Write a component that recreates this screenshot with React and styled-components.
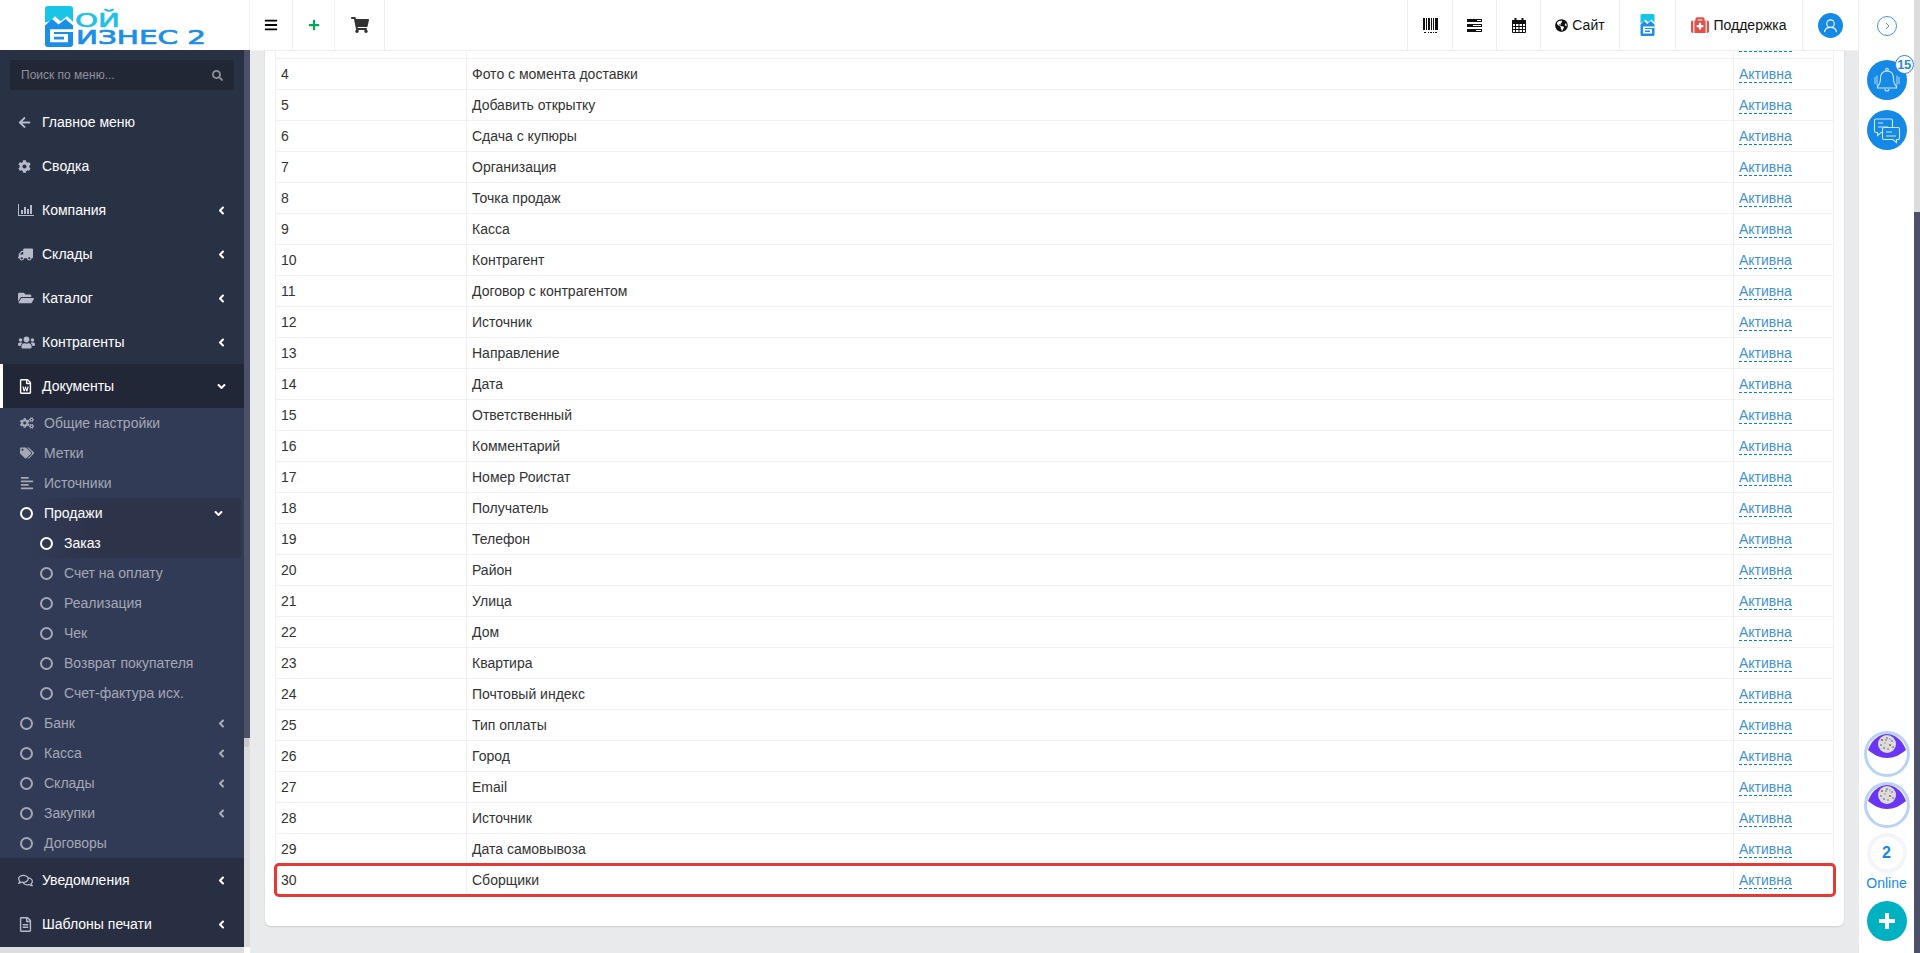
import React from 'react';
import styled, { createGlobalStyle } from 'styled-components';
import {
  FaBars, FaPlus, FaShoppingCart, FaGlobeAmericas, FaMedkit,
  FaSearch, FaArrowLeft, FaCog, FaTruck, FaFolderOpen, FaUsers, FaRegFileWord,
  FaCogs, FaTags, FaAlignLeft, FaRegComments, FaRegFileAlt, FaAngleLeft, FaAngleDown,
} from 'react-icons/fa';

const Global = createGlobalStyle`
  html, body { margin: 0; padding: 0; height: 953px; overflow: hidden; background: #fff; }
  body { font-family: "Liberation Sans", Arial, sans-serif; font-size: 14px; color: #333; }
  * { box-sizing: border-box; }
`;

const Page = styled.div`display: flex; width: 1920px; height: 953px; overflow: hidden;`;
const Main = styled.div`display: flex; flex-direction: column; width: 1859px; height: 953px;`;

const Header = styled.header`display: flex; flex: none; height: 50px; background: #fff;`;
const LogoCell = styled.div`flex: none; width: 250px; height: 50px; border-right: 1px solid #eee;`;
const Cell = styled.div`
  flex: none; display: flex; align-items: center; justify-content: center; gap: ${p => p.$gap || 0}px;
  width: ${p => p.$w}px; height: 50px; border-right: 1px solid #eee; color: #111; font-size: 14px;
  ${p => p.$first && 'border-left: 1px solid #eee;'}
`;
const Spacer = styled.div`flex: 1;`;
const Avatar = styled.div`
  width: 25px; height: 25px; border-radius: 50%; background: #1589e6; display: flex;
  align-items: center; justify-content: center;
`;

const Body = styled.div`display: flex; flex: 1; min-height: 0;`;

const Sidebar = styled.aside`display: flex; flex: none; width: 250px; background: #fff;`;
const Nav = styled.nav`
  display: flex; flex-direction: column; width: 244px; height: 903px;
  background: #293145; border-bottom: 6px solid #dedede;
`;
const SearchWrap = styled.div`padding: 10px; flex: none;`;
const SearchBox = styled.div`
  display: flex; align-items: center; justify-content: space-between; height: 30px; padding: 0 11px;
  background: #222736; border-radius: 3px; color: #8f929b; font-size: 12px;
`;
const Item = styled.div`
  display: flex; align-items: center; flex: none; height: 44px; padding-left: 18px; padding-right: 16px;
  color: #fff; font-size: 14px; background: ${p => (p.$active ? '#222738' : 'transparent')};
  border-left: ${p => (p.$active ? '3px solid #fff' : 'none')};
  ${p => p.$active && 'padding-left: 15px;'}
`;
const ItemIcon = styled.span`
  display: flex; width: 24px; flex: none; color: #b7bacb; font-size: ${p => p.$size || 15}px;
  ${p => p.$white && 'color: #fff;'}
  ${p => p.$flip && 'transform: scaleX(-1); justify-content: flex-end;'}
`;
const ItemText = styled.span`flex: 1; white-space: nowrap;`;
const Caret = styled.span`display: flex; font-size: 13px; color: ${p => (p.$dim ? '#a9adb9' : '#fff')};`;
const SubList = styled.div`flex: none; background: #323b56;`;
const SubItem = styled.div`
  display: flex; align-items: center; height: 30px; padding-left: 20px; padding-right: 16px;
  color: ${p => (p.$on ? '#fff' : '#a5a8b4')}; font-size: 14px; white-space: nowrap;
`;
const SubIcon = styled.span`display: flex; width: 24px; flex: none; font-size: 14px;`;
const Ring = styled.span`
  flex: none; width: 13px; height: 13px; border-radius: 50%; border: 2.5px solid currentColor; margin-right: 11px;
`;
const OpenGroup = styled.div`
  width: 241px; background: linear-gradient(90deg, #323b56 10%, #2d3349 40%);
`;
const DeepItem = styled(SubItem)`padding-left: 40px;`;
const Tail = styled.div`flex: none; background: #292f43;`;

const ScrollRail = styled.div`
  display: flex; flex-direction: column; width: 6px; height: 897px; background: #dcdcdc;
`;
const ScrollThumb = styled.div`flex: none; height: ${p => p.$h}px; background: ${p => p.$bg || '#4c5169'};`;
const ScrollNub = styled.div`flex: none; width: 5px; height: 9px; background: #c9c9c9; border-radius: 0 0 2px 2px;`;

const Content = styled.main`
  flex: 1; padding: 0 15px; background: #e9eaec; overflow: hidden; border-top: 1px solid #f0f0f0;
`;
const Card = styled.section`
  margin-top: -23px; padding: 0 10px 30px; background: #fff; border-radius: 6px;
  box-shadow: 0 1px 2px rgba(0, 0, 0, 0.12);
`;
const Row = styled.div`
  position: relative; display: grid; grid-template-columns: 192px 1267px 100px; height: 31px;
  border-bottom: 1px solid #f1f1f1;
  ${p => p.$marked && `
    &::after {
      content: ''; position: absolute; left: -1px; right: -2px; top: -2px; bottom: -2px;
      border: 3px solid #e53935; border-radius: 5px; pointer-events: none;
    }
  `}
`;
const Td = styled.div`
  display: flex; align-items: center; padding-left: 5px; color: #333; font-size: 14px;
  border-right: 1px solid #f1f1f1;
  ${p => p.$first && 'border-left: 1px solid #f1f1f1;'}
`;
const StatusLink = styled.span`
  color: #4492cf; border-bottom: 1px dashed #0088cc; line-height: 16px;
`;

const RightPanel = styled.aside`
  display: flex; flex-direction: column; align-items: center; width: 55px; height: 953px; background: #fff;
  padding-top: 16px; padding-bottom: 12px; flex: none;
`;
const Toggle = styled.div`
  display: flex; align-items: center; justify-content: center; width: 20px; height: 20px; border-radius: 50%;
  border: 1px solid #4a94dc; margin-bottom: 24px;
`;
const RoundBtn = styled.div`
  position: relative; display: flex; align-items: center; justify-content: center; flex: none;
  width: 40px; height: 40px; border-radius: 50%; background: ${p => p.$bg || '#1589e6'}; margin-bottom: 10px;
`;
const Badge = styled.span`
  position: absolute; top: -5px; right: -7px; display: flex; align-items: center; justify-content: center;
  width: 19px; height: 19px; border-radius: 50%; background: #fff; border: 1px solid #2f86d6;
  color: #2f86d6; font-size: 13px; font-weight: 700; letter-spacing: -0.5px;
`;
const Push = styled.div`flex: 1;`;
const Peer = styled.div`flex: none; width: 46px; height: 46px; margin-bottom: 5px;`;
const OnlineCount = styled.div`
  display: flex; align-items: center; justify-content: center; flex: none; width: 40px; height: 40px;
  border-radius: 50%; border: 4px solid #f3f5fa; color: #1589e6; font-size: 16px; font-weight: 700;
`;
const OnlineLabel = styled.div`color: #1589e6; font-size: 14px; line-height: 16px; margin: 2px 0 10px;`;
const PlusBtn = styled(RoundBtn)`margin-bottom: 0;`;

const PageRail = styled.div`display: flex; flex-direction: column; width: 6px; height: 953px; background: #dcdcdc;`;

const BrandMark = () => (
  <g>
    <path d="M0 3a3 3 0 0 1 3-3h22a3 3 0 0 1 3 3v14l-6-6-6.500 5.500L10 11l-4 4.500-6 2.500z" fill="#18c5e6" />
    <path d="M0 21l7-7 6.500 6 7-6L28 21v20a3 3 0 0 1-3 3H3a3 3 0 0 1-3-3z" fill="#1a8fe8" />
    <path d="M5 25h23v3H9v2h14v9H5zM9 33v3h10v-3z" fill="#fff" />
  </g>
);

const Logo = () => (
  <svg width="249" height="50" viewBox="0 0 249 50">
    <g transform="translate(45 6) scale(1 .93)"><BrandMark /></g>
    <text x="75" y="27" fontFamily='"DejaVu Sans", sans-serif' fontSize="19" fill="#22c0e6" stroke="#22c0e6" strokeWidth=".6" textLength="45" lengthAdjust="spacingAndGlyphs">ОЙ</text>
    <text x="76" y="44" fontFamily='"DejaVu Sans", sans-serif' fontSize="19" fill="#1a8fe8" stroke="#1a8fe8" strokeWidth=".7" textLength="130" lengthAdjust="spacingAndGlyphs">ИЗНЕС 2</text>
  </svg>
);

const SmallMark = () => (
  <svg width="15" height="22" viewBox="0 0 28 44"><BrandMark /></svg>
);

const BarcodeGlyph = () => (
  <svg width="15" height="15" viewBox="0 0 15 15" fill="#111">
    <path d="M0 0h2v12H0zM3 0h1v12H3zM5 0h2v12H5zM8 0h1v12H8zM10 0h1v12h-1zM12 0h3v12h-3z" />
    <path d="M1 14h2v1H1zM5 14h1v1H5zM7 14h2v1H7zM10 14h1v1h-1zM12 14h2v1h-2z" />
  </svg>
);

const RackGlyph = () => (
  <svg width="15" height="13" viewBox="0 0 15 13" fill="#111">
    <path d="M0 0h15v3H0zM0 5h15v3H0zM0 10h15v3H0z" />
    <path d="M10 1h4v1h-4zM6 6h8v1H6zM9 11h5v1H9z" fill="#fff" />
  </svg>
);

const CalendarGlyph = () => (
  <svg width="14" height="15" viewBox="0 0 14 15" fill="none" stroke="#111" strokeWidth="1">
    <path d="M.5 2.500h13v12H.5z" />
    <path d="M.5 2.500h13v3H.5z" fill="#111" />
    <path d="M3.500 5v10M7 5v10M10.500 5v10M.5 8.500h13M.5 11.500h13" />
    <path d="M3.500 0v3M10.500 0v3" strokeWidth="2" />
  </svg>
);

const ChartGlyph = () => (
  <svg width="16" height="12" viewBox="0 0 16 12" fill="#b7bacb">
    <path d="M0 0h1v11h15v1H0z" />
    <path d="M3 6h2v4H3zM6 3h2v7H6zM9 5h2v5H9zM12 1h2v9h-2z" />
  </svg>
);

const UserGlyph = () => (
  <svg width="15" height="15" viewBox="0 0 16 16" fill="none" stroke="#fff" strokeWidth="1.100">
    <circle cx="8" cy="6" r="4" />
    <path d="M1.500 15c.5-3 3-5 6.500-5s6 2 6.500 5" />
  </svg>
);

const BellGlyph = () => (
  <svg width="28" height="28" viewBox="0 0 28 28" fill="none" stroke="#cfe6fa" strokeWidth="1.100">
    <circle cx="14" cy="3.500" r="1.300" />
    <path d="M14 5c-4.500 0-6.500 3.500-6.500 7.500 0 4-1 6-3 8v1.500h19v-1.500c-2-2-3-4-3-8C20.500 8.500 18.500 5 14 5z" />
    <path d="M12 23a2 2 0 0 0 4 0" />
    <path d="M2 11v7M4 9.500v10M26 11v7M24 9.500v10" opacity=".8" />
  </svg>
);

const ChatGlyph = () => (
  <svg width="28" height="28" viewBox="0 0 28 28" fill="none" stroke="#cfe6fa" strokeWidth="1.100">
    <path d="M3 3h15a1.500 1.500 0 0 1 1.500 1.500V15a1.500 1.500 0 0 1-1.500 1.500H8L4.500 19.500V16.500H3A1.500 1.500 0 0 1 1.500 15V4.500A1.500 1.500 0 0 1 3 3z" fill="#1589e6" />
    <path d="M5 7h5M5 11h10" />
    <path d="M11 11.500h14a1.500 1.500 0 0 1 1.500 1.500v9a1.500 1.500 0 0 1-1.500 1.500h-1.500V26.500L20 23.500H11A1.500 1.500 0 0 1 9.500 22v-9A1.500 1.500 0 0 1 11 11.500z" fill="#1589e6" />
    <path d="M13 16h6M13 20h10" />
  </svg>
);

const ballDots = [[-5,-4,'#c9534f'],[0,-6,'#7aa38a'],[5,-3,'#8a8fc0'],[-6,1,'#7aa38a'],[-2,-1,'#b7b7b7'],[3,1,'#c9534f'],[6,3,'#6aa0c0'],[-3,4,'#8a8fc0'],[1,5,'#d29a55'],[-1,-4,'#999'],[3,-5,'#b5b5b5']];

const PeerAvatar = () => (
  <Peer>
    <svg width="46" height="46" viewBox="0 0 46 46">
      <circle cx="23" cy="23" r="21.500" fill="#fff" stroke="#b9d3f7" strokeWidth="3" />
      <path d="M4 19C8 8 16 3 23 3s15 5 19 16c-6 5-12 8-19 8S10 24 4 19z" fill="#6b35f5" />
      <circle cx="23" cy="13" r="9" fill="#dcdcdc" />
      {ballDots.map(([dx, dy, c], i) => <circle key={i} cx={23 + dx} cy={13 + dy} r="1.100" fill={c} />)}
    </svg>
  </Peer>
);

const mainItems = [
  { t: 'Главное меню', i: <FaArrowLeft />, size: 13 },
  { t: 'Сводка', i: <FaCog />, size: 13 },
  { t: 'Компания', i: <ChartGlyph />, c: 1 },
  { t: 'Склады', i: <FaTruck />, c: 1, flip: 1 },
  { t: 'Каталог', i: <FaFolderOpen />, c: 1, size: 16 },
  { t: 'Контрагенты', i: <FaUsers />, c: 1, size: 17 },
];
const deep = ['Счет на оплату', 'Реализация', 'Чек', 'Возврат покупателя', 'Счет-фактура исх.'];
const groups = [['Банк', 1], ['Касса', 1], ['Склады', 1], ['Закупки', 1], ['Договоры', 0]];

const labels = ['', 'Фото с момента доставки', 'Добавить открытку', 'Сдача с купюры', 'Организация', 'Точка продаж', 'Касса', 'Контрагент', 'Договор с контрагентом', 'Источник', 'Направление', 'Дата', 'Ответственный', 'Комментарий', 'Номер Роистат', 'Получатель', 'Телефон', 'Район', 'Улица', 'Дом', 'Квартира', 'Почтовый индекс', 'Тип оплаты', 'Город', 'Email', 'Источник', 'Дата самовывоза', 'Сборщики'];

export default function App() {
  return (
    <Page>
      <Global />
      <Main>
        <Header>
          <LogoCell><Logo /></LogoCell>
          <Cell $w={43}><FaBars size={14} color="#000" /></Cell>
          <Cell $w={42}><FaPlus size={12} color="#00a65a" /></Cell>
          <Cell $w={50}><FaShoppingCart size={18} color="#333" /></Cell>
          <Spacer />
          <Cell $w={46} $first><BarcodeGlyph /></Cell>
          <Cell $w={44}><RackGlyph /></Cell>
          <Cell $w={44}><CalendarGlyph /></Cell>
          <Cell $w={79} $gap={4}><FaGlobeAmericas size={13} />Сайт</Cell>
          <Cell $w={56}><SmallMark /></Cell>
          <Cell $w={127} $gap={4}><FaMedkit size={18} color="#e2504a" />Поддержка</Cell>
          <Cell $w={56}><Avatar><UserGlyph /></Avatar></Cell>
        </Header>
        <Body>
          <Sidebar>
            <Nav>
              <SearchWrap>
                <SearchBox>Поиск по меню...<FaSearch size={11} color="#8f929b" /></SearchBox>
              </SearchWrap>
              {mainItems.map(m => (
                <Item key={m.t}>
                  {m.flip
                    ? <ItemIcon $flip><FaTruck /></ItemIcon>
                    : <ItemIcon $size={m.size}>{m.i}</ItemIcon>}
                  <ItemText>{m.t}</ItemText>
                  {m.c ? <Caret><FaAngleLeft /></Caret> : null}
                </Item>
              ))}
              <Item $active>
                <ItemIcon $white><FaRegFileWord /></ItemIcon>
                <ItemText>Документы</ItemText>
                <Caret><FaAngleDown /></Caret>
              </Item>
              <SubList>
                <SubItem><SubIcon><FaCogs /></SubIcon>Общие настройки</SubItem>
                <SubItem><SubIcon><FaTags /></SubIcon>Метки</SubItem>
                <SubItem><SubIcon><FaAlignLeft /></SubIcon>Источники</SubItem>
                <OpenGroup>
                  <SubItem $on>
                    <Ring /><ItemText>Продажи</ItemText><Caret><FaAngleDown /></Caret>
                  </SubItem>
                  <DeepItem $on><Ring />Заказ</DeepItem>
                </OpenGroup>
                {deep.map(d => <DeepItem key={d}><Ring />{d}</DeepItem>)}
                {groups.map(([g, c]) => (
                  <SubItem key={g}>
                    <Ring /><ItemText>{g}</ItemText>
                    {c ? <Caret $dim><FaAngleLeft /></Caret> : null}
                  </SubItem>
                ))}
              </SubList>
              <Tail>
                <Item>
                  <ItemIcon><FaRegComments /></ItemIcon>
                  <ItemText>Уведомления</ItemText>
                  <Caret><FaAngleLeft /></Caret>
                </Item>
                <Item>
                  <ItemIcon><FaRegFileAlt /></ItemIcon>
                  <ItemText>Шаблоны печати</ItemText>
                  <Caret><FaAngleLeft /></Caret>
                </Item>
              </Tail>
            </Nav>
            <ScrollRail>
              <ScrollThumb $h={688} />
              <ScrollNub />
            </ScrollRail>
          </Sidebar>
          <Content>
            <Card>
              {labels.map((l, i) => (
                <Row key={i} $marked={i + 3 === 30}>
                  <Td $first>{l ? i + 3 : ''}</Td>
                  <Td>{l}</Td>
                  <Td><StatusLink>Активна</StatusLink></Td>
                </Row>
              ))}
            </Card>
          </Content>
        </Body>
      </Main>
      <RightPanel>
        <Toggle>
          <svg width="8" height="8" viewBox="0 0 8 8" fill="none" stroke="#4a94dc" strokeWidth="1">
            <path d="M3 1l3 3-3 3" />
          </svg>
        </Toggle>
        <RoundBtn><BellGlyph /><Badge>15</Badge></RoundBtn>
        <RoundBtn><ChatGlyph /></RoundBtn>
        <Push />
        <PeerAvatar />
        <PeerAvatar />
        <OnlineCount>2</OnlineCount>
        <OnlineLabel>Online</OnlineLabel>
        <PlusBtn $bg="#00b1c1">
          <svg width="20" height="20" viewBox="0 0 20 20"><path d="M8 2h4v6h6v4h-6v6H8v-6H2V8h6z" fill="#fff" /></svg>
        </PlusBtn>
      </RightPanel>
      <PageRail>
        <ScrollThumb $h={212} $bg="#dcdcdc" />
        <ScrollThumb $h={741} />
      </PageRail>
    </Page>
  );
}
